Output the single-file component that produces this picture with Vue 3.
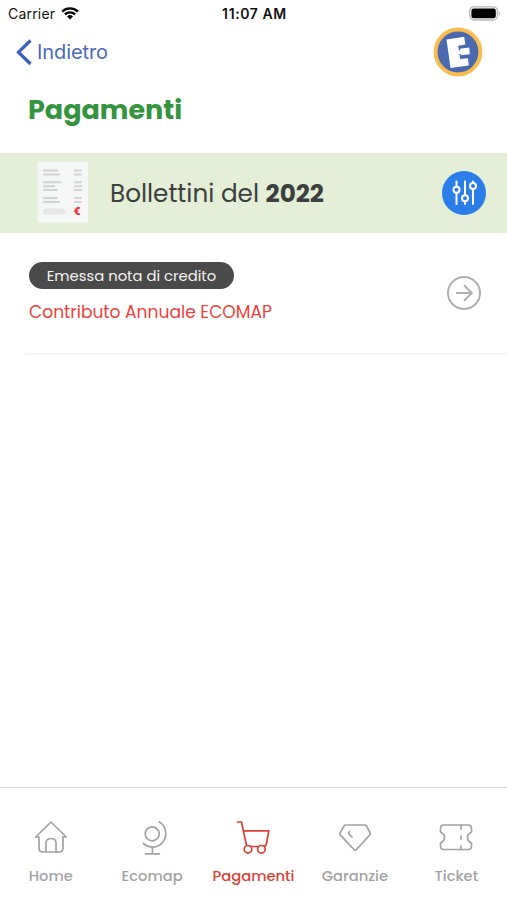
<script setup>
import { ref } from 'vue';

const year = ref(2022);
const activeTab = ref('Pagamenti');

const payments = ref([
  { id: 1, state: 'Emessa nota di credito', title: 'Contributo Annuale ECOMAP' },
]);

const tabs = [
  { name: 'Home', cls: 'home' },
  { name: 'Ecomap', cls: 'ecomap' },
  { name: 'Pagamenti', cls: 'pagamenti' },
  { name: 'Garanzie', cls: 'garanzie' },
  { name: 'Ticket', cls: 'ticket' },
];
</script>

<template>
  <div class="screen">
    <div class="status">
      <div class="status-left">
        <span class="carrier">Carrier</span>
        <svg class="wifi" width="18" height="13" viewBox="0 0 18 13">
          <path d="M1.2 4.6 A11.2 11.2 0 0 1 16.8 4.6" />
          <path d="M3.9 7.4 A7.3 7.3 0 0 1 14.1 7.4" />
          <path class="dot" d="M9 12.6 L6 9.5 A4.3 4.3 0 0 1 12 9.5 Z" />
        </svg>
      </div>
      <span class="time">11:07 AM</span>
      <div class="status-right">
        <svg width="32" height="16" viewBox="0 0 32 16">
          <rect x="0.8" y="0.8" width="27.6" height="13.2" rx="4" fill="#fff" stroke="#b5b5b5" stroke-width="1.3" />
          <rect x="2.4" y="2.5" width="24.4" height="9.8" rx="2.2" fill="#000" />
          <path d="M29.8 5.2 Q31.8 7.5 29.8 9.8 Z" fill="#999" />
        </svg>
      </div>
    </div>

    <header class="nav">
      <a class="back">
        <svg width="17" height="28" viewBox="0 0 17 28">
          <path d="M15.5 2.5 L3.5 14.2 L15.5 26" />
        </svg>
        <span>Indietro</span>
      </a>
      <svg class="logo" width="50" height="50" viewBox="0 0 50 50">
        <circle cx="25" cy="25" r="22.4" fill="#4b69ae" stroke="#f8bd4e" stroke-width="4" />
        <path
          d="M13.5 12.4 L31.2 9.8 L32.3 17.6 L25.2 18.8 L25.9 23.4 L27.3 23.2 L27 21.7 L36.3 20.6 L36.8 27.2 L28 28.3 L27.7 26.8 L26.4 27 L27.2 32 L35 31.2 L35.8 38.6 L17.5 41 Z"
          fill="#fff" />
      </svg>
    </header>

    <h1>Pagamenti</h1>

    <section class="band">
      <svg class="receipt" width="52" height="62" viewBox="0 0 52 62">
        <rect x="0.5" y="0" width="50.5" height="60.5" rx="1" fill="#f5f6f6" />
        <g stroke="#d2d4d4" stroke-width="2.1" stroke-linecap="round">
          <path d="M7 8.5 H20 M7 12.5 H22 M7 20.3 H23.5 M7 24.3 H17 M7 28 H20 M7 36 H20 M7 40 H22" />
          <path d="M38 8.5 H44 M38 12.5 H44 M38 20.3 H44 M38 24.3 H44 M38 28 H44 M38 36 H44 M38 40 H44" />
        </g>
        <path d="M8 46.5 H26 L29.5 49.5 L26 52.5 H8 Q6 52.5 6 49.5 Q6 46.5 8 46.5 Z" fill="#e6e7e7" />
        <text x="36.8" y="53">€</text>
      </svg>
      <h2>Bollettini del <b>{{ year }}</b></h2>
      <button class="filter">
        <svg width="44" height="44" viewBox="0 0 44 44">
          <path d="M14.5 10.5 V15.5 M14.5 22 V33 M23 10.5 V24 M23 30.5 V33 M31 18.5 V33 M31 10.5 V12" />
          <circle cx="14.5" cy="18.8" r="3" />
          <circle cx="23" cy="27.2" r="3" />
          <circle cx="31" cy="15" r="3" />
        </svg>
      </button>
    </section>

    <main>
      <div v-for="p in payments" :key="p.id" class="row">
        <div class="info">
          <span class="badge">{{ p.state }}</span>
          <p>{{ p.title }}</p>
        </div>
        <svg class="go" width="36" height="36" viewBox="0 0 36 36">
          <circle cx="18" cy="18" r="16" />
          <path d="M10 18 H25.5 M18 10.3 L25.8 18 L18 25.7" />
        </svg>
      </div>
    </main>

    <nav class="tabs">
      <a v-for="tab in tabs" :key="tab.name" :class="['tab', tab.cls, { active: tab.name === activeTab }]"
         @click="activeTab = tab.name">
        <svg width="36" height="36" viewBox="0 0 36 36">
          <g v-if="tab.name === 'Home'">
            <path d="M2.8 18 L18 3 L33.2 18 H29.8" />
            <path d="M2.8 18 H6 V29 Q6 33 10 33 H26 Q30 33 30 29 V18" />
            <path d="M13 33 V24 Q13 19.5 18 19.5 Q23 19.5 23 24 V33" />
          </g>
          <g v-else-if="tab.name === 'Ecomap'">
            <circle cx="18.2" cy="14.8" r="7" />
            <path d="M25.2 3 C32.5 7 34 17 28.5 23.5 C23.5 29.5 15 29.3 9.5 24.5" />
            <path d="M18.5 28 V34.6 M11.5 34.8 H25.5" />
          </g>
          <g v-else-if="tab.name === 'Pagamenti'">
            <path d="M2.5 3 H6.5 L11.3 25.5 Q11.8 27.5 14 27.5 H28 Q31 27.5 31.5 24.5 L33.8 11.8 H8.5" />
            <circle cx="13" cy="30.3" r="3.8" class="wheel" />
            <circle cx="26.4" cy="30.3" r="3.8" class="wheel" />
          </g>
          <g v-else-if="tab.name === 'Garanzie'">
            <path d="M8.5 6 H28 Q29 6 29.5 7 L33.3 14.2 Q33.5 15 33 15.6 L19 31 Q18.2 31.8 17.4 31 L3 15.6 Q2.6 15 3 14.2 L7 7 Q7.5 6 8.5 6 Z" />
            <path d="M12.5 12.5 Q11 14 12.5 15.5 L15 18" />
          </g>
          <g v-else>
            <path d="M6 6 H30 Q33.5 6 33.5 9.5 V13 Q29.5 15 29.5 18.5 Q29.5 22 33.5 24 V27 Q33.5 30.5 30 30.5 H6 Q2.5 30.5 2.5 27 V24 Q6.5 22 6.5 18.5 Q6.5 15 2.5 13 V9.5 Q2.5 6 6 6 Z" />
            <path d="M23 6 V10 M23 17 V20 M23 27 V30.5" />
          </g>
        </svg>
        <span>{{ tab.name }}</span>
      </a>
    </nav>
  </div>
</template>

<style>
body {
  background-color: #fff;
}
</style>

<style scoped>
.screen {
  display: flex;
  flex-direction: column;
  height: 100vh;
  overflow: hidden;
  background-color: #fff;
  font-family: "Poppins", "Inter", sans-serif;
  color: #3b403e;
}

.status {
  display: grid;
  grid-template-columns: 1fr auto 1fr;
  align-items: center;
  height: 27px;
  padding: 0 6px 0 8px;
  font-family: "Inter", sans-serif;
  color: #111;
}

.status-left {
  display: flex;
  align-items: center;
  gap: 6px;
}

.carrier {
  font-size: 14px;
  letter-spacing: 0.2px;
}

.wifi {
  fill: none;
  stroke: #000;
  stroke-width: 2.3;
}

.wifi .dot {
  fill: #000;
  stroke: none;
}

.time {
  font-size: 14px;
  font-weight: 600;
  letter-spacing: 0.6px;
}

.status-right {
  display: flex;
  justify-content: flex-end;
}

.nav {
  display: flex;
  align-items: center;
  justify-content: space-between;
  height: 50px;
  padding: 0 24px 0 15px;
}

.back {
  display: flex;
  align-items: center;
  gap: 5px;
  font-family: "Inter", sans-serif;
  font-size: 20px;
  letter-spacing: -0.1px;
  color: #4a69bb;
}

.back svg {
  fill: none;
  stroke: #3b5fba;
  stroke-width: 3.2;
}

h1 {
  height: 66px;
  margin: 0 0 10px;
  padding-left: 28px;
  line-height: 66px;
  font-size: 27px;
  font-weight: 700;
  color: #35953f;
}

.band {
  display: flex;
  flex: none;
  align-items: center;
  height: 80px;
  padding: 0 21px 0 37px;
  background-color: #e5eed6;
}

.receipt text {
  font-family: "Inter", sans-serif;
  font-size: 10px;
  font-weight: 900;
  fill: #ef3340;
}

h2 {
  flex: 1;
  margin: 0 0 0 21px;
  font-size: 24.7px;
  font-weight: 400;
  white-space: nowrap;
}

h2 b {
  font-weight: 700;
}

.filter {
  width: 44px;
  height: 44px;
  padding: 0;
  border: none;
  border-radius: 50%;
  background-color: #2b7de9;
}

.filter svg {
  display: block;
  fill: none;
  stroke: #fff;
  stroke-width: 2;
  stroke-linecap: round;
}

main {
  flex: 1;
}

.row {
  display: flex;
  align-items: flex-start;
  justify-content: space-between;
  box-sizing: border-box;
  height: 122px;
  margin-left: 25px;
  padding: 29px 25px 0 4px;
  border-bottom: 2px solid #f3f3f3;
}

.badge {
  display: block;
  box-sizing: border-box;
  width: 205px;
  height: 27px;
  border-radius: 14px;
  line-height: 28px;
  text-align: center;
  font-size: 14.8px;
  color: #f4f4f4;
  background-color: #4a4a4a;
}

.row p {
  margin: 11px 0 0;
  line-height: 25px;
  font-size: 17.1px;
  color: #f0403c;
}

.go {
  margin-top: 13px;
  fill: none;
  stroke: #b0b0b0;
  stroke-width: 2;
}

.tabs {
  display: grid;
  grid-template-columns: repeat(5, 1fr);
  box-sizing: border-box;
  height: 113px;
  padding-top: 31px;
  border-top: 1px solid #dcdcdc;
}

.tab {
  display: flex;
  flex-direction: column;
  align-items: center;
  gap: 10px;
  font-size: 14.7px;
  font-weight: 500;
  line-height: 22px;
  color: #a3a3a3;
}

.tab svg {
  fill: none;
  stroke: currentColor;
  stroke-width: 1.7;
  stroke-linecap: round;
  stroke-linejoin: round;
}

.tab .wheel {
  fill: #fff;
}

.tab.active {
  color: #dc4137;
}
</style>
